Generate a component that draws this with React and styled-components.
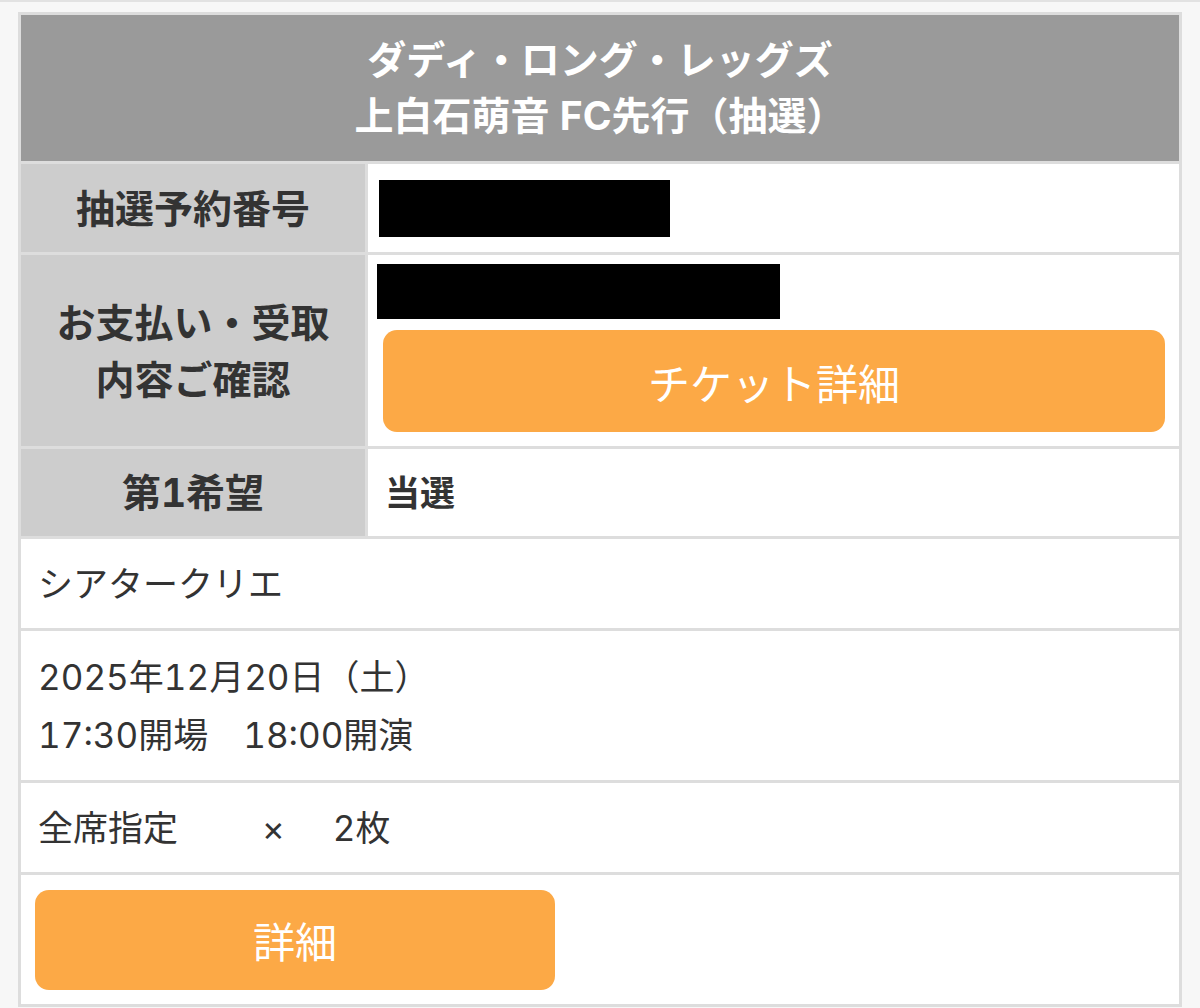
import React from "react";
import styled, { createGlobalStyle } from "styled-components";

const FONT = `"Inter", "Noto Sans CJK JP", "Noto Sans", sans-serif`;

const Global = createGlobalStyle`
  html, body { margin: 0; padding: 0; background: #f7f7f7; }
  body { font-family: ${FONT}; color: #333; font-variant-numeric: tabular-nums; }
`;

const Page = styled.div`
  width: 1200px;
  min-height: 1008px;
  background: #f7f7f7;
  display: flex;
  flex-direction: column;
`;

const TopRule = styled.div`
  height: 2px;
  background: #e2e2e2;
  margin-bottom: 10px;
`;

const Card = styled.div`
  margin: 0 18px;
  border: 3px solid #dddddd;
  background: #fff;
  display: flex;
  flex-direction: column;
`;

const Header = styled.div`
  height: 146px;
  background: #9a9a9a;
  color: #fff;
  font-weight: 700;
  font-size: 39px;
  line-height: 56px;
  display: flex;
  flex-direction: column;
  align-items: center;
  justify-content: center;
`;

const Row = styled.div`
  display: grid;
  grid-template-columns: ${(p) => (p.$split ? "347px 1fr" : "1fr")};
  height: ${(p) => p.$h}px;
  border-top: 3px solid #dddddd;
`;

const Label = styled.div`
  background: #cdcdcd;
  border-right: 3px solid #dddddd;
  display: flex;
  align-items: center;
  justify-content: center;
  text-align: center;
  font-weight: 700;
  font-size: 39px;
  line-height: 57px;
  color: #333;
`;

const Value = styled.div`
  display: flex;
  flex-direction: column;
  justify-content: ${(p) => p.$justify || "center"};
  align-items: flex-start;
  padding: ${(p) => p.$pad || "0 17px"};
  font-size: 35px;
  line-height: 58px;
  font-weight: ${(p) => (p.$bold ? 700 : 400)};
  color: #333;
  box-sizing: border-box;
`;

const Redact = styled.div`
  background: #000;
  width: ${(p) => p.$w}px;
  height: ${(p) => p.$hh}px;
`;

const OrangeButton = styled.button`
  display: flex;
  align-items: center;
  justify-content: center;
  background: #fca946;
  color: #fff;
  border: none;
  border-radius: 14px;
  font-family: ${FONT};
  font-size: 42px;
  font-weight: 400;
  height: ${(p) => p.$h || 102}px;
  width: ${(p) => p.$w || "100%"};
  padding: 0;
  cursor: pointer;
`;

const WideButton = styled(OrangeButton)`
  align-self: stretch;
  width: auto;
  margin: 11px 0 0 6px;
`;

const Gap = styled.span`
  display: inline-block;
  width: ${(p) => p.$w}px;
`;

const Line = styled.div`
  white-space: pre;
`;

export default function App() {
  return (
    <>
      <Global />
      <Page>
        <TopRule />
        <Card>
          <Header>
            <div>ダディ・ロング・レッグズ</div>
            <div>上白石萌音 FC先行（抽選）</div>
          </Header>

          <Row $split $h={88}>
            <Label>抽選予約番号</Label>
            <Value $pad="0 11px">
              <Redact $w={291} $hh={57} />
            </Value>
          </Row>

          <Row $split $h={191}>
            <Label>
              お支払い・受取
              <br />
              内容ご確認
            </Label>
            <Value $justify="flex-start" $pad="9px 14px 0 9px">
              <Redact $w={403} $hh={55} />
              <WideButton>チケット詳細</WideButton>
            </Value>
          </Row>

          <Row $split $h={87}>
            <Label>第1希望</Label>
            <Value $bold>当選</Value>
          </Row>

          <Row $h={89}>
            <Value>シアタークリエ</Value>
          </Row>

          <Row $h={149}>
            <Value>
              <Line>2025年12月20日（土）</Line>
              <Line>17:30開場　18:00開演</Line>
            </Value>
          </Row>

          <Row $h={89}>
            <Value>
              <Line>
                全席指定
                <Gap $w={84} />×<Gap $w={48} />2枚
              </Line>
            </Value>
          </Row>

          <Row $h={129}>
            <Value $pad="0 14px">
              <OrangeButton $w="520px" $h={100}>
                詳細
              </OrangeButton>
            </Value>
          </Row>
        </Card>
      </Page>
    </>
  );
}
